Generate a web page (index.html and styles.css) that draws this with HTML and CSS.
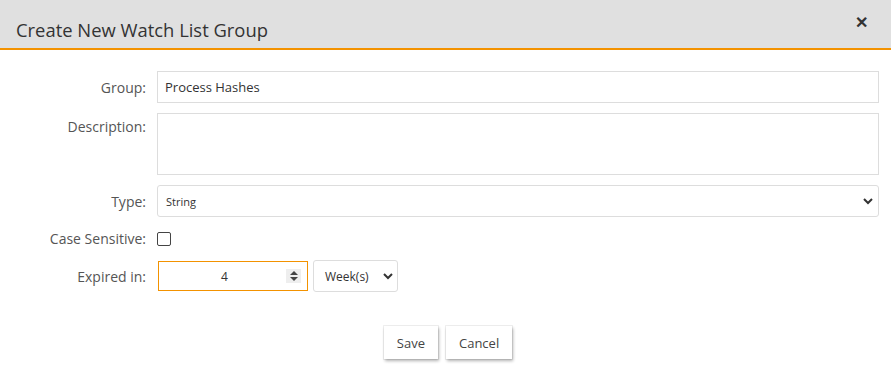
FILE: index.html
```html
<!DOCTYPE html>
<html lang="en">
<head>
  <meta charset="UTF-8">
  <title>Create New Watch List Group</title>
  <link rel="stylesheet" href="styles.css">
</head>
<body>

<div class="dialogo">
  <div class="cabecera">
    <span class="titulo">Create New Watch List Group</span>
    <span class="cerrar">&#x2715;</span>
  </div>

  <form class="formulario">
    <div class="fila">
      <label class="etiqueta">Group:</label>
      <input class="campo" type="text" value="Process Hashes">
    </div>
    <div class="fila fila-arriba">
      <label class="etiqueta">Description:</label>
      <textarea class="campo area"></textarea>
    </div>
    <div class="fila">
      <label class="etiqueta">Type:</label>
      <div class="selector campo">
        <span>String</span>
        <svg width="10" height="8" viewBox="0 0 10 8"><path d="M1 2 L5 6 L9 2" fill="none" stroke="#333" stroke-width="2"/></svg>
      </div>
    </div>
    <div class="fila">
      <label class="etiqueta">Case Sensitive:</label>
      <span class="casilla"></span>
    </div>
    <div class="fila">
      <label class="etiqueta">Expired in:</label>
      <div class="numero">
        <span class="valor">4</span>
        <span class="flechas">
          <svg width="8" height="10" viewBox="0 0 8 10"><path d="M4 0 L8 4 L0 4 Z M4 10 L8 6 L0 6 Z" fill="#444"/></svg>
        </span>
      </div>
      <div class="selector unidad">
        <span>Week(s)</span>
        <svg width="10" height="8" viewBox="0 0 10 8"><path d="M1 2 L5 6 L9 2" fill="none" stroke="#333" stroke-width="2"/></svg>
      </div>
    </div>

    <div class="botones">
      <button type="button" class="btn">Save</button>
      <button type="button" class="btn">Cancel</button>
    </div>
  </form>
</div>

</body>
</html>
```

FILE: styles.css
```css
body {
  margin: 0;
  background: #fff;
  font-family: "Open Sans", sans-serif;
  color: #444;
}

.cabecera {
  height: 50px;
  background-color: #e0e0e0;
  border-bottom: 2px solid #f39200;
  display: flex;
  align-items: center;
  justify-content: space-between;
  padding: 0 23px 0 16px;
  box-sizing: border-box;
}

.titulo {
  font-size: 18.4px;
  color: #333;
  margin-top: 10px;
}

.cerrar {
  font-size: 16px;
  font-weight: bold;
  color: #333;
  margin-top: -5px;
}

.formulario {
  padding: 21px 12px 20px 0;
}

.fila {
  display: flex;
  align-items: center;
  margin-bottom: 10px;
}

.fila-arriba {
  align-items: flex-start;
}

.fila-arriba .etiqueta {
  padding-top: 4px;
}

.etiqueta {
  width: 157px;
  padding-right: 11px;
  box-sizing: border-box;
  text-align: right;
  font-size: 14px;
  color: #555;
}

.campo {
  flex: 1;
  height: 32px;
  border: 1px solid #ddd;
  box-sizing: border-box;
  padding: 0 7px;
  font-family: "Open Sans", sans-serif;
  font-size: 13px;
  color: #333;
  outline: none;
}

.area {
  height: 62px;
  resize: none;
}

.selector {
  display: flex;
  align-items: center;
  justify-content: space-between;
  border: 1px solid #ddd;
  border-radius: 3px;
  box-sizing: border-box;
  font-size: 11px;
  color: #333;
  padding: 0 5px 0 8px;
}

.casilla {
  width: 14px;
  height: 14px;
  border: 1px solid #444;
  border-radius: 2px;
  box-sizing: border-box;
  margin: 5px 0 4px 0;
}

.numero {
  width: 150px;
  height: 30px;
  margin-left: 1px;
  border: 1px solid #f39200;
  box-sizing: border-box;
  display: flex;
  align-items: center;
  font-size: 12px;
  color: #333;
}

.valor {
  flex: 1;
  text-align: center;
  padding-left: 4px;
}

.flechas {
  width: 15px;
  height: 14px;
  background: #eee;
  display: flex;
  align-items: center;
  justify-content: center;
  margin-right: 6px;
}

.unidad {
  width: 85px;
  height: 32px;
  margin-left: 5px;
  font-size: 12px;
  padding: 0 4px 0 11px;
}

.botones {
  display: flex;
  justify-content: center;
  gap: 8px;
  margin-top: 34px;
  padding-left: 17px;
}

.btn {
  background: #fff;
  border: none;
  height: 33px;
  padding: 0 13px;
  font-family: "Open Sans", sans-serif;
  font-size: 13px;
  color: #444;
  box-shadow: 0 0 0 1px rgba(0, 0, 0, 0.06), 1px 2px 3px rgba(0, 0, 0, 0.3);
  cursor: pointer;
}
```
